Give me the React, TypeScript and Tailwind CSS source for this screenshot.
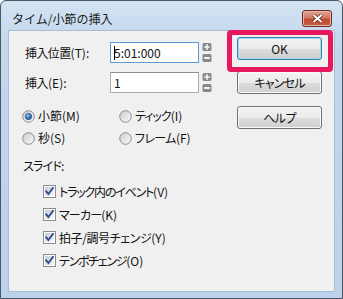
import React from "react";

const font = "font-['Noto_Sans_CJK_JP','Noto_Sans',sans-serif] [font-feature-settings:'palt']";

function Radio({ checked }: { checked?: boolean }) {
  return (
    <svg width="13" height="13" viewBox="0 0 13 13" className="flex-none">
      <defs>
        <linearGradient id={checked ? "rg1" : "rg0"} x1="0" y1="0" x2="1" y2="1">
          <stop offset="0" stopColor="#c9cbcd" />
          <stop offset="1" stopColor="#fbfbfb" />
        </linearGradient>
        <radialGradient id="rdot" cx="0.4" cy="0.35" r="0.7">
          <stop offset="0" stopColor="#a9d0f2" />
          <stop offset="0.5" stopColor="#3c79bd" />
          <stop offset="1" stopColor="#1b4680" />
        </radialGradient>
      </defs>
      <circle cx="6.5" cy="6.5" r="5.8" fill={`url(#${checked ? "rg1" : "rg0"})`} stroke="#8b8d90" strokeWidth="1" />
      {checked && <circle cx="6.5" cy="6.5" r="3.2" fill="url(#rdot)" stroke="#24507f" strokeWidth="0.6" />}
    </svg>
  );
}

function Check() {
  return (
    <svg width="13" height="13" viewBox="0 0 13 13" className="flex-none">
      <defs>
        <linearGradient id="cbg" x1="0" y1="0" x2="1" y2="1">
          <stop offset="0" stopColor="#c6cbd2" />
          <stop offset="1" stopColor="#f7f8f9" />
        </linearGradient>
      </defs>
      <rect x="0.5" y="0.5" width="12" height="12" fill="#ffffff" stroke="#8b8d90" />
      <rect x="2" y="2" width="9" height="9" fill="url(#cbg)" />
      <path d="M3.2 6.4 L5.4 9 L9.9 3" fill="none" stroke="#2d4d8a" strokeWidth="1.9" strokeLinecap="square" />
    </svg>
  );
}

function Spinner() {
  return (
    <svg width="10" height="21" viewBox="0 0 10 21" className="flex-none">
      <rect x="0.5" y="1" width="9" height="8" rx="1.5" fill="#88898b" />
      <path d="M5 2.3 V7.7 M2.2 5 H7.8" stroke="#f4f4f4" strokeWidth="1.7" />
      <rect x="0.5" y="12" width="9" height="8" rx="1.5" fill="#88898b" />
      <path d="M2.2 16 H7.8" stroke="#f4f4f4" strokeWidth="1.9" />
    </svg>
  );
}

function Btn({ children, def }: { children: React.ReactNode; def?: boolean }) {
  return (
    <div
      className={
        "w-[85px] h-[23px] rounded-[3px] border flex items-center justify-center text-[12px] text-[#111] bg-[linear-gradient(to_bottom,#f2f2f2_0%,#ebebeb_50%,#dddddd_51%,#cfcfcf_100%)] " +
        (def
          ? "border-[#3c7fb1] shadow-[inset_0_0_0_1px_#9ed8f3]"
          : "border-[#707070] shadow-[inset_0_0_0_1px_#fafafa]")
      }
    >
      {children}
    </div>
  );
}

function Lbl({ jp, en, tr }: { jp: string; en: string; tr: string }) {
  return (
    <span>
      <span className={tr}>{jp}</span>
      <span>{en}</span>
    </span>
  );
}

const checks: [string, string, string][] = [
  ["トラック内のイベント", "(V)", "tracking-[-1.2px]"],
  ["マーカー", "(K)", "tracking-[-0.8px]"],
  ["拍子/調号チェンジ", "(Y)", "tracking-[-0.4px]"],
  ["テンポチェンジ", "(O)", "tracking-[-1.3px]"],
];

export default function App() {
  return (
    <div
      className={
        "relative w-[343px] h-[299px] overflow-hidden flex flex-col border border-[#4a5866] rounded-t-[6px] bg-[linear-gradient(to_bottom,#d4e3f3_0px,#c3d7ed_40px,#bcd2ea_100%)] text-[12px] leading-[16px] text-[#111] " +
        font
      }
    >
      {/* title bar */}
      <div className="h-[29px] flex-none flex items-start justify-between pl-[11px] pr-[10px] pt-[9px]">
        <div className="h-[17px] flex items-center text-[12px] text-[#1b1b1b] [font-feature-settings:normal]">タイム/小節の挿入</div>
        <div className="w-[30px] h-[17px] rounded-[3px] border border-[#6e2a1c] bg-[linear-gradient(to_bottom,#e2a594_0%,#d27a64_45%,#c04a31_55%,#c65f43_100%)] shadow-[inset_0_0_0_1px_#e8b6a8] flex items-center justify-center">
          <svg width="11" height="9" viewBox="0 0 11 9">
            <path d="M1.5 1 L9.5 8 M9.5 1 L1.5 8" stroke="#5a2218" strokeWidth="3.4" />
            <path d="M1.5 1 L9.5 8 M9.5 1 L1.5 8" stroke="#ffffff" strokeWidth="2" />
          </svg>
        </div>
      </div>

      {/* client */}
      <div className="flex-1 mx-[7px] mb-[6px] bg-[#f0f0f0] border border-[#a9bdd3] flex">
        <div className="w-[228px] flex-none pl-[16px] pt-[11px] flex flex-col">
          <div className="h-[21px] flex items-center">
            <div className="w-[85px]">
              <Lbl jp="挿入位置" en="(T):" tr="tracking-[-0.6px]" />
            </div>
            <div className="relative w-[89px] h-[21px] bg-white border border-[#5b9bd5] flex items-center pl-[3px]">
              <span>5:01:000</span>
              <span className="absolute left-[3px] top-[3px] w-px h-[14px] bg-black" />
            </div>
            <div className="ml-[3px]">
              <Spinner />
            </div>
          </div>
          <div className="h-[21px] mt-[9px] flex items-center">
            <div className="w-[85px]">
              <Lbl jp="挿入" en="(E):" tr="tracking-[-0.5px]" />
            </div>
            <div className="w-[89px] h-[21px] bg-white border border-[#abadb3] border-t-[#8c8f94] flex items-center pl-[3px]">
              <span>1</span>
            </div>
            <div className="ml-[3px]">
              <Spinner />
            </div>
          </div>

          <div className="mt-[12px] -ml-[3px] grid grid-cols-[97px_1fr]">
            <div className="h-[22px] flex items-center gap-[3px]">
              <Radio checked />
              <span>小節(M)</span>
            </div>
            <div className="h-[22px] flex items-center gap-[3px]">
              <Radio />
              <Lbl jp="ティック" en="(I)" tr="tracking-[-1px]" />
            </div>
            <div className="h-[22px] flex items-center gap-[3px]">
              <Radio />
              <span>秒(S)</span>
            </div>
            <div className="h-[22px] flex items-center gap-[3px]">
              <Radio />
              <Lbl jp="フレーム" en="(F)" tr="tracking-[-0.6px]" />
            </div>
          </div>

          <div className="mt-[6px] -ml-[2px] h-[22px] flex items-center">
            <Lbl jp="スライド" en=":" tr="tracking-[-0.8px]" />
          </div>

          <div className="mt-[3px] ml-[18px] flex flex-col">
            {checks.map(([jp, en, tr]) => (
              <div key={jp} className="h-[23px] flex items-center gap-[3px]">
                <Check />
                <Lbl jp={jp} en={en} tr={tr} />
              </div>
            ))}
          </div>
        </div>

        <div className="pt-[6px] flex flex-col">
          <Btn def>OK</Btn>
          <div className="mt-[11px]">
            <Btn>
              <span className="tracking-[-0.8px]">キャンセル</span>
            </Btn>
          </div>
          <div className="mt-[12px]">
            <Btn>
              <span className="tracking-[-0.5px]">ヘルプ</span>
            </Btn>
          </div>
        </div>
      </div>

      {/* highlight annotation */}
      <div className="absolute left-[226px] top-[29px] w-[106px] h-[42px] border-[5px] border-[#e8185f] rounded-[4px]" />
    </div>
  );
}
